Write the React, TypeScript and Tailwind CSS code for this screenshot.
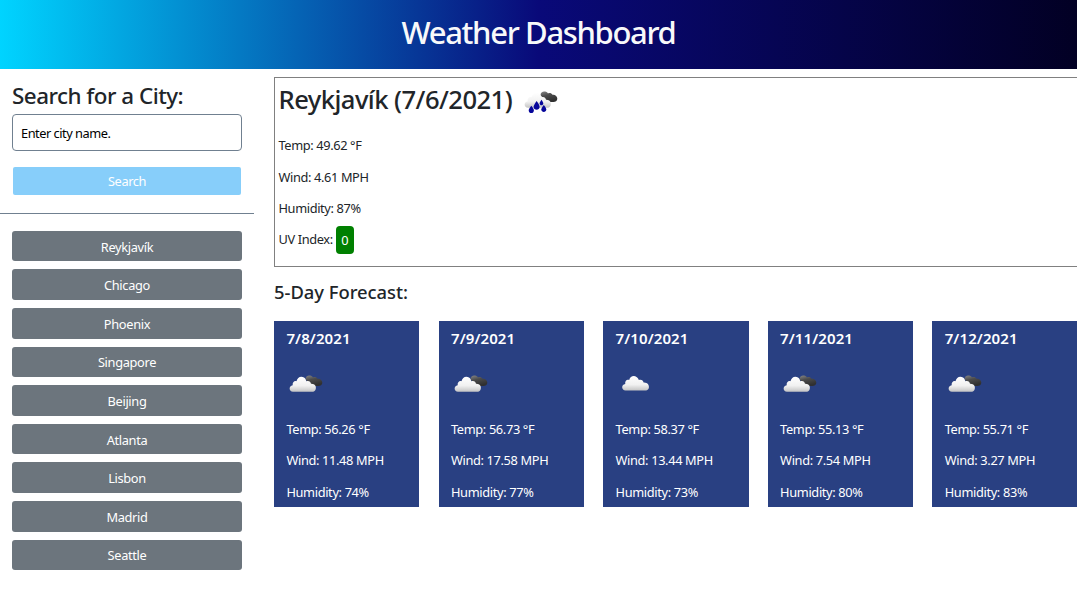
import React from "react";

const cities = ["Reykjavík", "Chicago", "Phoenix", "Singapore", "Beijing", "Atlanta", "Lisbon", "Madrid", "Seattle"];

type Day = { date: string; icon: "broken" | "scattered"; temp: string; wind: string; humidity: string };

const days: Day[] = [
  { date: "7/8/2021", icon: "broken", temp: "56.26", wind: "11.48", humidity: "74" },
  { date: "7/9/2021", icon: "broken", temp: "56.73", wind: "17.58", humidity: "77" },
  { date: "7/10/2021", icon: "scattered", temp: "58.37", wind: "13.44", humidity: "73" },
  { date: "7/11/2021", icon: "broken", temp: "55.13", wind: "7.54", humidity: "80" },
  { date: "7/12/2021", icon: "broken", temp: "55.71", wind: "3.27", humidity: "83" },
];

function WeatherIcon({ kind }: { kind: "broken" | "scattered" | "rain" }) {
  const id = "cloud-" + kind;
  return (
    <svg width="40" height="40" viewBox="0 0 40 40" className="block shrink-0">
      <defs>
        <linearGradient id={id} x1="0" y1="0" x2="0" y2="1">
          <stop offset="0" stopColor="#ffffff" />
          <stop offset="0.6" stopColor="#f1f1f1" />
          <stop offset="1" stopColor="#c4c4c4" />
        </linearGradient>
        <linearGradient id={id + "-dark"} x1="0" y1="0" x2="0.4" y2="1">
          <stop offset="0" stopColor="#888888" />
          <stop offset="0.45" stopColor="#4c4c4c" />
          <stop offset="1" stopColor="#303030" />
        </linearGradient>
      </defs>
      {kind !== "scattered" && (
        <path
          d="M19.5 15.5C19.3 12.5 22 11 24 11.5C25.5 11.7 26.5 12.5 27 13.5C28.5 12.6 30.5 13 31.5 14.8C34.5 14.7 36.5 16.8 36.3 19C36.1 21 34.5 22 32.5 22H27Z"
          fill={`url(#${id}-dark)`}
        />
      )}
      {kind === "scattered" ? (
        <path
          d="M9.5 26.5C5.5 26.5 4.8 20.5 9.3 20C8.6 16.7 11.5 15.2 13.2 16C14 12.4 17.8 10.8 20.5 12.9C22 13.8 22.5 14.9 22.8 16.1C25 15 27.3 16.3 27.6 18.6C31.5 18.3 33.7 21.5 32.8 24.2C32.2 26 30.8 26.5 29 26.5Z"
          fill={`url(#${id})`}
        />
      ) : (
        <path
          d="M7 27.7C2.7 27.7 2.5 21.8 6.7 21.3C6.2 18.2 8.5 16.5 10.5 17.2C11.3 13.2 15 11.5 18 13.5C19.5 14.5 20 15.9 20.3 17.3C22.5 16.2 24.8 17.5 25 19.8C28.8 19.5 30.6 22.6 29.7 25.2C29 27.2 27.8 27.7 26 27.7Z"
          fill={`url(#${id})`}
        />
      )}
      {kind === "rain" && (
        <g fill="#06069a">
          <path d="M10.3 25.8C12.2 28.1 12.9 29.3 12.9 30.5C12.9 33.9 7.7 33.9 7.7 30.5C7.7 29.3 8.6 28.1 10.3 25.8Z" />
          <path d="M15.6 21C18 24.2 18.6 25.7 18.6 27C18.6 30.7 12.6 30.7 12.6 27C12.6 25.7 13.5 24.2 15.6 21Z" />
          <path d="M20.5 19.8C21.7 21.6 22.3 22.6 22.3 23.5C22.3 25.9 18.6 25.9 18.6 23.5C18.6 22.6 19.3 21.6 20.5 19.8Z" />
          <path d="M22.8 25C24.6 27.2 25.3 28.4 25.3 29.5C25.3 32.8 20.3 32.8 20.3 29.5C20.3 28.4 21.1 27.2 22.8 25Z" />
        </g>
      )}
    </svg>
  );
}

export default function App() {
  return (
    <div className="h-[608px] w-full overflow-hidden bg-white font-['Noto_Sans',sans-serif] text-[12.8px] text-[#212529]">
      <header className="flex h-[69px] items-center justify-center bg-[linear-gradient(90deg_in_srgb,#00d4ff_0%,#090979_50%,#020024_100%)] pb-[5px]">
        <h1 className="text-[31px] font-medium tracking-[-1.35px] whitespace-nowrap text-[#f8f9fa]">Weather Dashboard</h1>
      </header>
      <div className="flex">
        <aside className="w-[254px] shrink-0">
          <div className="flex h-[145px] flex-col border-b border-[#708090] px-3 pt-[14px]">
            <h2 className="h-[31px] text-[22.4px] leading-[26px] font-medium tracking-[-0.5px] whitespace-nowrap">Search for a City:</h2>
            <input
              className="h-[37px] w-[230px] shrink-0 rounded-[4px] border border-[#708090] px-2 text-[12.8px] tracking-[-0.48px] outline-none placeholder:text-black"
              placeholder="Enter city name."
            />
            <button className="mx-px mt-4 h-7 shrink-0 rounded-[2px] bg-[#87cefa] pt-px tracking-[-0.4px] text-white">Search</button>
          </div>
          <div className="flex flex-col gap-[8px] px-3 pt-[16.8px]">
            {cities.map((city) => (
              <button key={city} className="h-[30.6px] rounded-[3px] bg-[#6c757d] pt-px leading-[20px] tracking-[-0.33px] text-white">
                {city}
              </button>
            ))}
          </div>
        </aside>
        <main className="ml-5 min-w-0 flex-1 pt-2">
          <section className="h-[190px] border border-r-0 border-[#808080] pl-[3.5px]">
            <div className="flex h-[43px] items-center gap-[9px]">
              <h2 className="text-[25.6px] leading-[32px] font-medium tracking-[-0.55px] whitespace-nowrap">Reykjavík (7/6/2021)</h2>
              <WeatherIcon kind="rain" />
            </div>
            <div className="flex flex-col pt-[9px] leading-[31.6px] tracking-[-0.37px]">
              <p>Temp: 49.62 °F</p>
              <p>Wind: 4.61 MPH</p>
              <p>Humidity: 87%</p>
              <p className="flex h-[31px] items-center gap-[3px]">
                UV Index:
                <span className="flex h-7 w-[18px] items-center justify-center rounded-[4px] bg-[#008000] pt-0.5 text-white">0</span>
              </p>
            </div>
          </section>
          <h3 className="mt-[13px] text-[18.4px] leading-[24px] font-medium tracking-[-0.02px]">5-Day Forecast:</h3>
          <div className="-mr-[0.7px] mt-[17px] grid grid-cols-5 gap-[19.2px]">
            {days.map((day) => (
              <article key={day.date} className="h-[186px] bg-[#294082] pt-[7px] pl-[12.4px] text-white">
                <h4 className="text-[15px] leading-[20px] font-semibold tracking-[0.1px]">{day.date}</h4>
                <div className="mt-4">
                  <WeatherIcon kind={day.icon} />
                </div>
                <div className="mt-[10px] leading-[31.4px] tracking-[-0.35px] whitespace-nowrap">
                  <p>Temp: {day.temp} °F</p>
                  <p>Wind: {day.wind} MPH</p>
                  <p>Humidity: {day.humidity}%</p>
                </div>
              </article>
            ))}
          </div>
        </main>
      </div>
    </div>
  );
}
